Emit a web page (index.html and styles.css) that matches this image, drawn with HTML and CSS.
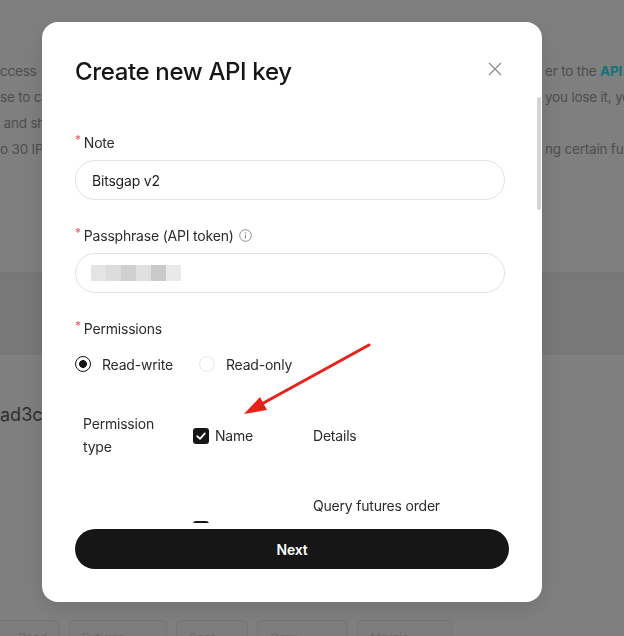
FILE: index.html
```html
<!DOCTYPE html>
<html lang="en">
<head>
    <meta charset="UTF-8">
    <meta name="viewport" content="width=device-width, initial-scale=1.0">
    <title>Create new API key</title>
    <link rel="stylesheet" href="styles.css">
</head>
<body>
    <div class="page">
        <div class="intro">
            <p class="intro-line"><span class="frag-left">ccess</span><span class="frag-right">er to the <b class="link">API docs</b></span></p>
            <p class="intro-line"><span class="frag-left">se to ca</span><span class="frag-right">you lose it, you</span></p>
            <p class="intro-line"><span class="frag-left">&nbsp;and sh</span><span class="frag-right"></span></p>
            <p class="intro-line"><span class="frag-left">o 30 IPs</span><span class="frag-right">ng certain functions</span></p>
        </div>
        <div class="band"></div>
        <div class="addr">ad3c</div>
        <div class="tags">
            <span class="tag tag-a">Read</span>
            <span class="tag tag-b">Futures</span>
            <span class="tag tag-c">Spot</span>
            <span class="tag tag-d">Copy</span>
            <span class="tag tag-e">Margin</span>
        </div>
    </div>

    <div class="overlay">
        <div class="modal">
            <div class="modal-head">
                <h2>Create new API key</h2>
                <button class="close-btn" type="button" aria-label="Close">
                    <svg width="14" height="14" viewBox="0 0 14 14"><path d="M1 1 L13 13 M13 1 L1 13" stroke="#8c8c8c" stroke-width="1.3" fill="none"/></svg>
                </button>
            </div>

            <div class="modal-body">
                <div class="form-item">
                    <label class="form-label"><span class="req">*</span>Note</label>
                    <div class="field">Bitsgap v2</div>
                </div>
                <div class="form-item">
                    <label class="form-label"><span class="req">*</span>Passphrase (API token)
                        <svg class="info" width="13" height="13" viewBox="0 0 13 13"><circle cx="6.5" cy="6.5" r="5.8" stroke="#8c8c8c" stroke-width="1" fill="none"/><circle cx="6.5" cy="4" r="0.8" fill="#8c8c8c"/><path d="M6.5 5.8 V9.6" stroke="#8c8c8c" stroke-width="1.1"/></svg>
                    </label>
                    <div class="field">
                        <span class="masked"><i></i><i></i><i></i><i></i><i></i><i></i></span>
                    </div>
                </div>
                <div class="form-item form-item-last">
                    <label class="form-label"><span class="req">*</span>Permissions</label>
                    <div class="radio-group">
                        <span class="radio checked"><span class="dot"></span>Read-write</span>
                        <span class="radio"><span class="dot"></span>Read-only</span>
                    </div>
                </div>

                <table class="perm-table">
                    <colgroup><col class="c1"><col class="c2"><col></colgroup>
                    <tr>
                        <th>Permission type</th>
                        <th><span class="check"></span>Name</th>
                        <th>Details</th>
                    </tr>
                    <tr>
                        <td rowspan="4">Futures</td>
                        <td><span class="check"></span>Orders</td>
                        <td>Query futures order information, order history and trade details</td>
                    </tr>
                    <tr>
                        <td><span class="check"></span>Trade</td>
                        <td>Place, modify and cancel futures orders for all contracts</td>
                    </tr>
                    <tr>
                        <td><span class="check"></span>Positions</td>
                        <td>Query futures positions, leverage and margin mode settings</td>
                    </tr>
                    <tr>
                        <td><span class="check"></span>Account</td>
                        <td>Query futures account assets and bills</td>
                    </tr>
                    <tr>
                        <td rowspan="3">Spot</td>
                        <td><span class="check"></span>Orders</td>
                        <td>Query spot order information, order history and trade details</td>
                    </tr>
                    <tr>
                        <td><span class="check"></span>Trade</td>
                        <td>Place and cancel spot orders, including plan orders</td>
                    </tr>
                    <tr>
                        <td><span class="check"></span>Wallet</td>
                        <td>Query spot account assets and transfer records</td>
                    </tr>
                    <tr>
                        <td rowspan="2">Copy trading</td>
                        <td><span class="check"></span>Follow</td>
                        <td>Query and manage copy trading orders and settings</td>
                    </tr>
                    <tr>
                        <td><span class="check"></span>Lead</td>
                        <td>Query and manage elite trader orders and profit sharing</td>
                    </tr>
                </table>
            </div>

            <div class="modal-foot">
                <button class="btn-next" type="button">Next</button>
            </div>

            <span class="scroll-thumb"></span>
        </div>
    </div>

    <svg class="annotation" width="624" height="636" viewBox="0 0 624 636">
        <path d="M369 345 L258 406" stroke="#e8221b" stroke-width="3" stroke-linecap="round" fill="none"/>
        <path d="M244 414 L260 397 L267 410 Z" fill="#e8221b"/>
    </svg>
</body>
</html>
```

FILE: styles.css
```css
* {
    box-sizing: border-box;
}

body {
    margin: 0;
    width: 624px;
    height: 636px;
    overflow: hidden;
    font-family: "Inter", "Noto Sans", sans-serif;
    background-color: #fff;
}

/* page behind the dialog */
.page {
    height: 636px;
    overflow: hidden;
    background-color: #fff;
}

.intro {
    padding-top: 58px;
}

.intro-line {
    display: flex;
    justify-content: space-between;
    margin: 0;
    height: 26px;
    line-height: 26px;
    font-size: 13.5px;
    color: #9c9c9c;
    white-space: nowrap;
    letter-spacing: -0.2px;
}

.frag-left {
    overflow: hidden;
}

.frag-right {
    width: 79px;
    overflow: hidden;
}

.link {
    color: #24e6f0;
    font-weight: 700;
}

.band {
    margin-top: 110px;
    height: 83px;
    background-color: #f0f0f0;
    border-top: 1px solid #ebebeb;
}

.addr {
    margin-top: 48px;
    font-size: 18px;
    line-height: 24px;
    color: #5c5c5c;
}

.tags {
    display: flex;
    gap: 9px;
    margin-top: 193px;
    margin-left: -10px;
}

.tag {
    flex: none;
    height: 30px;
    padding: 9px 12px;
    border: 1px solid #ececec;
    border-radius: 4px;
    background-color: #fafafa;
    font-size: 12px;
    color: #d6d6d6;
    white-space: nowrap;
    overflow: hidden;
}

.tag-a { width: 70px; text-align: right; }
.tag-b { width: 98px; }
.tag-c { width: 72px; }
.tag-d { width: 91px; }
.tag-e { width: 96px; }

/* dialog */
.overlay {
    position: fixed;
    inset: 0;
    background-color: rgba(0, 0, 0, 0.5);
    padding: 22px 0 0 42px;
}

.modal {
    position: relative;
    display: flex;
    flex-direction: column;
    width: 500px;
    height: 580px;
    background-color: #fff;
    border-radius: 16px;
    box-shadow: 0 6px 24px rgba(0, 0, 0, 0.12);
    overflow: hidden;
}

.modal-head {
    display: flex;
    justify-content: space-between;
    align-items: flex-start;
    height: 75px;
    padding: 34px 37px 0 33px;
}

.modal-head h2 {
    margin: 0;
    font-size: 24px;
    line-height: 32px;
    font-weight: 500;
    color: #161616;
    letter-spacing: -0.35px;
}

.close-btn {
    display: flex;
    align-items: center;
    justify-content: center;
    width: 20px;
    height: 20px;
    margin-top: 3px;
    padding: 0;
    border: none;
    background: none;
    cursor: pointer;
}

.modal-body {
    height: 426px;
    overflow-y: auto;
    padding: 34px 37px 40px 33px;
    scrollbar-width: none;
}

.modal-body::-webkit-scrollbar {
    display: none;
}

/* scroll position indicator at the right edge of the dialog */
.scroll-thumb {
    position: absolute;
    top: 75px;
    right: 1px;
    width: 4px;
    height: 113px;
    border-radius: 2px;
    background-color: #d4d4d4;
}

.form-item {
    margin-bottom: 24px;
}

.form-item-last {
    margin-bottom: 0;
}

.form-label {
    display: flex;
    align-items: center;
    height: 22px;
    margin-bottom: 7px;
    font-size: 14px;
    color: #2b2b2b;
    letter-spacing: -0.2px;
}

.req {
    color: #f0506e;
    font-size: 12px;
    margin-right: 3px;
    align-self: flex-start;
    line-height: 18px;
}

.info {
    margin-left: 5px;
}

.field {
    display: flex;
    align-items: center;
    height: 40px;
    padding: 0 16px;
    border: 1px solid #e2e2e2;
    border-radius: 20px;
    font-size: 14px;
    color: #1f1f1f;
    letter-spacing: -0.2px;
}

.masked {
    display: flex;
    margin-left: -1px;
    filter: blur(0.6px);
}

.masked i {
    width: 15px;
    height: 16px;
    background-color: #e4e4e4;
}

.masked i:nth-child(2) { background-color: #dcdcdc; }
.masked i:nth-child(3) { background-color: #cfcfcf; }
.masked i:nth-child(4) { background-color: #e0e0e0; }
.masked i:nth-child(5) { background-color: #c9c9c9; }
.masked i:nth-child(6) { background-color: #e9e9e9; }

.radio-group {
    display: flex;
    gap: 26px;
    margin-top: 15px;
}

.radio {
    display: flex;
    align-items: center;
    gap: 11px;
    height: 20px;
    font-size: 14px;
    color: #2b2b2b;
    letter-spacing: -0.2px;
}

.radio .dot {
    width: 16px;
    height: 16px;
    border: 1px solid #e8e8e8;
    border-radius: 50%;
}

.radio.checked .dot {
    border: 1.5px solid #161616;
    background: radial-gradient(circle, #161616 0 3.6px, transparent 4.2px);
}

.perm-table {
    width: 100%;
    margin-top: 20px;
    border-collapse: collapse;
    table-layout: fixed;
}

.perm-table .c1 { width: 110px; }
.perm-table .c2 { width: 120px; }

.perm-table th,
.perm-table td {
    padding: 18px 8px;
    font-size: 14px;
    font-weight: 400;
    line-height: 23px;
    color: #2b2b2b;
    text-align: left;
    vertical-align: middle;
    letter-spacing: -0.2px;
}

.check {
    display: inline-block;
    width: 16px;
    height: 16px;
    margin-right: 6px;
    vertical-align: -3px;
    border-radius: 3px;
    background-color: #161616;
    background-image: url("data:image/svg+xml,%3Csvg xmlns='http://www.w3.org/2000/svg' viewBox='0 0 16 16'%3E%3Cpath d='M4.2 8.2 L7 10.8 L11.8 5.4' stroke='white' stroke-width='1.8' fill='none' stroke-linecap='round' stroke-linejoin='round'/%3E%3C/svg%3E");
}

.modal-foot {
    padding: 6px 33px 33px 33px;
}

.btn-next {
    width: 434px;
    height: 40px;
    border: none;
    border-radius: 20px;
    background-color: #161616;
    color: #fff;
    font-family: inherit;
    font-size: 14px;
    font-weight: 600;
    letter-spacing: -0.2px;
    cursor: pointer;
}

/* red arrow drawn over the screenshot */
.annotation {
    position: fixed;
    top: 0;
    left: 0;
    pointer-events: none;
}
```
